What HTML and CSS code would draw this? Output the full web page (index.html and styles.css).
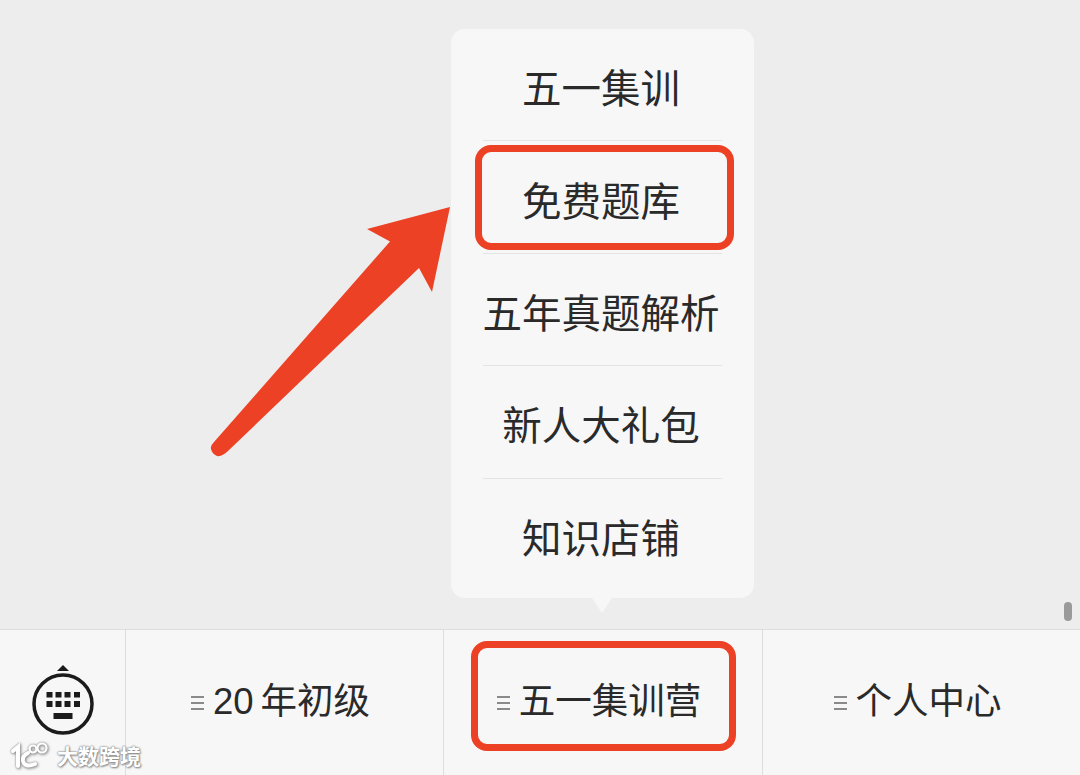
FILE: index.html
```html
<!DOCTYPE html>
<html lang="zh-CN">
<head>
  <meta charset="UTF-8">
  <title>公众号菜单</title>
  <link rel="stylesheet" href="styles.css">
</head>
<body>
  <div class="screen">
    <div class="chat">
      <div class="scrollbar"></div>
    </div>

    <div class="bar">
      <div class="kb-cell">
        <svg class="kb-icon" width="64" height="72" viewBox="0 0 64 72">
          <path d="M32 1l6 6H26z" fill="#1b1b1b"/>
          <circle cx="32" cy="40" r="29" fill="none" stroke="#1b1b1b" stroke-width="3.500"/>
          <g fill="#1b1b1b">
            <rect x="15.500" y="28" width="6" height="5.500"/>
            <rect x="24.500" y="28" width="6" height="5.500"/>
            <rect x="33.500" y="28" width="6" height="5.500"/>
            <rect x="43" y="28" width="6" height="5.500"/>
            <rect x="15.500" y="37" width="6" height="6"/>
            <rect x="24.500" y="37" width="6" height="6"/>
            <rect x="33.500" y="37" width="6" height="6"/>
            <rect x="43" y="37" width="6" height="6"/>
            <rect x="22.500" y="49" width="19" height="6"/>
          </g>
        </svg>
      </div>
      <div class="tab tab-first"><span class="lines"></span><span>20 年初级</span></div>
      <div class="tab tab-mid"><span class="lines"></span><span>五一集训营</span></div>
      <div class="tab tab-last"><span class="lines"></span><span>个人中心</span></div>
    </div>

    <div class="popup">
      <div class="popup-item">五一集训</div>
      <div class="popup-item">免费题库</div>
      <div class="popup-item">五年真题解析</div>
      <div class="popup-item">新人大礼包</div>
      <div class="popup-item">知识店铺</div>
    </div>

    <div class="mark mark-item"></div>
    <div class="mark mark-tab"></div>

    <svg class="arrow" width="245" height="252" viewBox="0 0 245 252">
      <path d="M240 1L222 86L209 62L18 245Q12 251 7 250Q2 248 1 243Q0 240 4 236L180 35.500L157 23Z" fill="#ec4125"/>
    </svg>

    <div class="watermark">
      <svg class="wm-logo" width="44" height="30" viewBox="0 0 44 30">
        <g fill="none" stroke="#fff" stroke-linecap="round">
          <path d="M3 10L8 6V25" stroke-width="4"/>
          <path d="M18 12Q12 15 13 20Q15 27 25 23" stroke-width="4"/>
          <circle cx="23" cy="8" r="3.500" stroke-width="2.200"/>
          <circle cx="32" cy="7" r="4.500" stroke-width="2.200"/>
        </g>
      </svg>
      <span>大数跨境</span>
    </div>
  </div>
</body>
</html>
```

FILE: styles.css
```css
* { box-sizing: border-box; }
body {
  margin: 0;
  font-family: "Liberation Sans", "Noto Sans CJK SC", sans-serif;
  color: #2a2a2a;
}
.screen {
  position: relative;
  width: 1080px;
  height: 775px;
  overflow: hidden;
  display: flex;
  flex-direction: column;
  background: #ededed;
}
.chat {
  height: 629px;
  flex: none;
  display: flex;
  justify-content: flex-end;
  align-items: flex-end;
  padding: 0 8px 8px 0;
}
.scrollbar {
  width: 8px;
  height: 19px;
  border-radius: 4px;
  background: #9a9a9a;
}
.bar {
  flex: 1;
  display: flex;
  background: #f7f7f7;
  border-top: 1px solid #dcdcdc;
}
.kb-cell {
  width: 126px;
  flex: none;
  border-right: 1px solid #dedede;
  display: flex;
  justify-content: center;
  padding-top: 34px;
}
.kb-icon { display: block; }
.tab {
  flex: none;
  display: flex;
  justify-content: center;
  align-items: center;
  gap: 9px;
  font-size: 36.500px;
  line-height: 1;
  border-right: 1px solid #dedede;
}
.tab-first { width: 318px; padding-right: 8px; word-spacing: -3px; }
.tab-mid { width: 319px; padding-right: 8px; }
.tab-last { width: 317px; padding-right: 8px; border-right: none; }
.lines {
  width: 13px;
  height: 14px;
  border-top: 2px solid #8a8a8a;
  border-bottom: 2px solid #8a8a8a;
  position: relative;
}
.lines::after {
  content: "";
  position: absolute;
  left: 0;
  right: 0;
  top: 4px;
  height: 2px;
  background: #8a8a8a;
}

.popup {
  position: absolute;
  left: 451px;
  top: 29px;
  width: 303px;
  height: 569px;
  padding: 0 32px 8px;
  border-radius: 14px;
  background: #f7f7f7;
  display: flex;
  flex-direction: column;
}
.popup::after {
  content: "";
  position: absolute;
  left: 141px;
  bottom: -15px;
  border-left: 10px solid transparent;
  border-right: 10px solid transparent;
  border-top: 15px solid #f7f7f7;
}
.popup-item {
  flex: 1;
  display: flex;
  align-items: center;
  justify-content: center;
  padding: 2px 3px 0 0;
  font-size: 39.500px;
  white-space: nowrap;
  border-bottom: 1px solid #e4e4e4;
}
.popup-item:last-child { border-bottom: none; }

.mark {
  position: absolute;
  border: 7px solid #ec4125;
  border-radius: 16px;
}
.mark-item { left: 475px; top: 145px; width: 259px; height: 105px; }
.mark-tab { left: 471px; top: 641px; width: 265px; height: 110px; }
.arrow { position: absolute; left: 210px; top: 206px; }

.watermark {
  position: absolute;
  left: 10px;
  top: 741px;
  display: flex;
  align-items: center;
  gap: 3px;
  font-size: 21px;
  line-height: 1;
  font-weight: bold;
  color: #fff;
  text-shadow: 0 0 2px #8c8c8c, 0 0 2px #8c8c8c, 1px 1px 2px #8c8c8c;
}
.wm-logo {
  display: block;
  filter: drop-shadow(0 0 1px #8c8c8c) drop-shadow(1px 1px 1px #a0a0a0);
}
```
